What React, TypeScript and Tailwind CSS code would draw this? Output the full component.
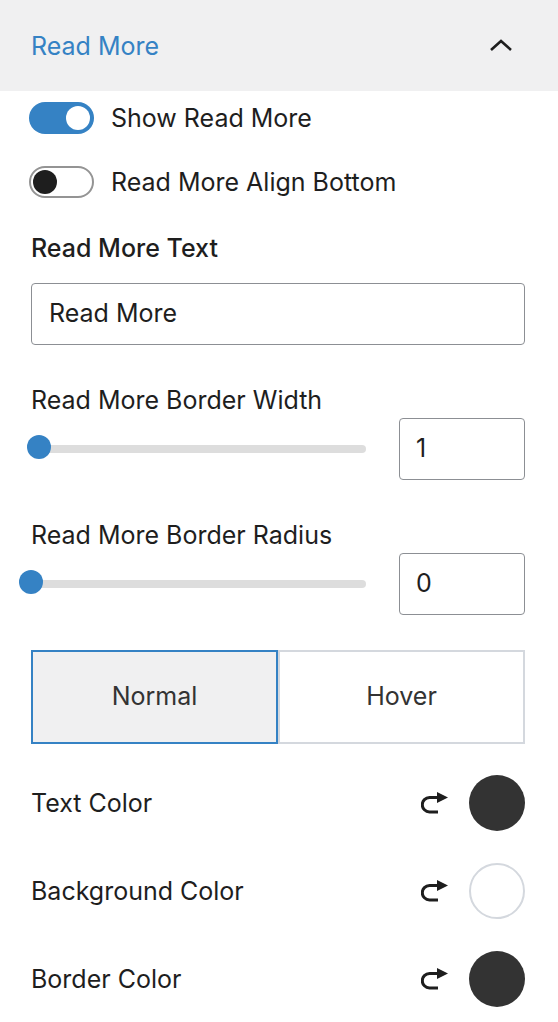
import React, { useState } from 'react';

const ResetIcon: React.FC = () => (
  <svg width="28" height="22" viewBox="0 0 28 22" fill="none">
    <path d="M17 5.5H8.5a7.2 7.2 0 0 0 0 14.4H17" stroke="#1e1e1e" strokeWidth="3" />
    <path d="M16 0L27 5.5L16 11z" fill="#1e1e1e" />
  </svg>
);

const Toggle: React.FC<{ on: boolean; onClick: () => void }> = ({ on, onClick }) => (
  <button
    onClick={onClick}
    className={`relative w-[65px] h-[32px] rounded-full shrink-0 ${on ? 'bg-[#3582c4]' : 'bg-white border-2 border-[#949494]'}`}
  >
    {on ? (
      <span className="absolute top-[4px] right-[4px] w-[24px] h-[24px] rounded-full bg-white" />
    ) : (
      <span className="absolute top-[2px] left-[2px] w-[24px] h-[24px] rounded-full bg-[#1e1e1e]" />
    )}
  </button>
);

const RangeRow: React.FC<{ label: string; value: number; pos: number }> = ({ label, value, pos }) => (
  <div className="mt-[40px]">
    <div className="text-[25px] leading-[30px] text-[#1e1e1e]">{label}</div>
    <div className="flex items-center mt-[3px]">
      <div className="relative flex-1 h-[62px] flex items-center">
        <div className="h-[8px] w-[335px] rounded-full bg-[#dddddd]" />
        <span
          className="absolute w-[24px] h-[24px] rounded-full bg-[#3582c4] top-[17px]"
          style={{ left: pos }}
        />
      </div>
      <div className="w-[126px] h-[62px] border border-[#8c8f94] rounded-[4px] flex items-center px-[16px] text-[25px] text-[#1e1e1e]">
        {value}
      </div>
    </div>
  </div>
);

const ColorRow: React.FC<{ label: string; color: string }> = ({ label, color }) => (
  <div className="flex items-center h-[88px]">
    <div className="flex-1 text-[25px] leading-[30px] text-[#1e1e1e]">{label}</div>
    <div className="mr-[20px] flex items-center"><ResetIcon /></div>
    <span
      className={`w-[56px] h-[56px] rounded-full ${color === 'white' ? 'bg-white border-2 border-[#d4d8de]' : 'bg-[#333333]'}`}
    />
  </div>
);

const App: React.FC = () => {
  const [showMore, setShowMore] = useState(true);
  const [alignBottom, setAlignBottom] = useState(false);
  const [tab, setTab] = useState<'normal' | 'hover'>('normal');

  return (
    <div className="w-[558px] min-h-[1022px] bg-white" style={{ fontFamily: 'Inter, "Noto Sans", sans-serif' }}>
      <div className="h-[91px] bg-[#f0f0f1] flex items-center justify-between pl-[31px] pr-[44px]">
        <span className="text-[25px] leading-[30px] text-[#3582c4]">Read More</span>
        <svg width="26" height="16" viewBox="0 0 26 16" fill="none">
          <path d="M3 12L13 3l10 9" stroke="#1e1e1e" strokeWidth="2.6" />
        </svg>
      </div>

      <div className="pl-[31px] pr-[33px]">
        <div className="flex items-center gap-[17px] mt-[11px] -ml-[2px]">
          <Toggle on={showMore} onClick={() => setShowMore(!showMore)} />
          <span className="text-[25px] leading-[30px] text-[#1e1e1e]">Show Read More</span>
        </div>
        <div className="flex items-center gap-[17px] mt-[32px] -ml-[2px]">
          <Toggle on={alignBottom} onClick={() => setAlignBottom(!alignBottom)} />
          <span className="text-[25px] leading-[30px] text-[#1e1e1e]">Read More Align Bottom</span>
        </div>

        <div className="mt-[35px] text-[25px] leading-[30px] font-medium text-[#1e1e1e]">Read More Text</div>
        <div className="mt-[20px] h-[62px] border border-[#8c8f94] rounded-[4px] flex items-center px-[17px] text-[25px] text-[#1e1e1e]">
          Read More
        </div>

        <RangeRow label="Read More Border Width" value={1} pos={-4} />
        <RangeRow label="Read More Border Radius" value={0} pos={-12} />

        <div className="flex mt-[35px] h-[94px]">
          <button
            onClick={() => setTab('normal')}
            className={`flex-1 text-[25px] text-[#333] ${tab === 'normal' ? 'bg-[#f0f0f1] border-2 border-[#3582c4]' : 'bg-white border-2 border-[#d4d8de]'}`}
          >
            Normal
          </button>
          <button
            onClick={() => setTab('hover')}
            className={`flex-1 text-[25px] text-[#333] ${tab === 'hover' ? 'bg-[#f0f0f1] border-2 border-[#3582c4]' : 'bg-white border-2 border-[#d4d8de]'}`}
          >
            Hover
          </button>
        </div>

        <div className="mt-[15px]">
          <ColorRow label="Text Color" color="dark" />
          <ColorRow label="Background Color" color="white" />
          <ColorRow label="Border Color" color="dark" />
        </div>
      </div>
    </div>
  );
};

export default App;
